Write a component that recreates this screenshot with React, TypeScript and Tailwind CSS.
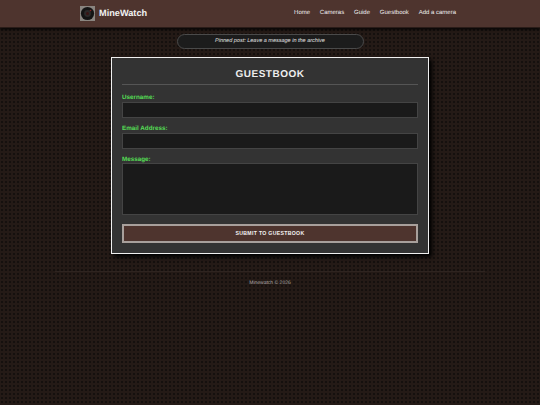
export default function App() {
  const enlaces = ["Home", "Cameras", "Guide", "Guestbook", "Add a camera"];

  return (
    <div className="h-[405px] overflow-hidden opacity-[0.999] bg-[#241a16] bg-[radial-gradient(#15100e_1px,transparent_1.1px)] bg-[size:4px_4px] font-['Liberation_Sans',sans-serif] [text-rendering:geometricPrecision]">
      {/* HEADER */}
      <header className="h-[28px] bg-[#4e342e] border-b border-[#2a1c18] shadow-[0_1px_3px_#000] pl-[80px] pr-[84px] flex items-center justify-between">
        <div className="flex items-center gap-[4px]">
          <svg width="15" height="15" viewBox="0 0 15 15">
            <rect width="15" height="15" fill="#8a8580" />
            <circle cx="7.5" cy="7.5" r="6.6" fill="#141414" />
            <circle cx="7.5" cy="7.5" r="3.4" fill="#2c2a2a" />
            <circle cx="7.5" cy="7.5" r="1.5" fill="#3a1515" />
            <circle cx="10.5" cy="4.5" r="0.8" fill="#8a2020" />
          </svg>
          <span className="text-[9.2px] font-bold text-[#f2f2f2]">MineWatch</span>
        </div>
        <nav className="flex gap-[9.8px] text-[6px] text-[#eeeeee]">
          {enlaces.map((enlace) => (
            <a key={enlace}>{enlace}</a>
          ))}
        </nav>
      </header>

      {/* PINNED POST */}
      <div className="mt-[6px] mx-auto w-[187px] h-[15px] rounded-full bg-[#1c1c1c] border border-[#4a4a4a] flex items-center justify-center text-[5.5px] italic text-[#e4e4e4]">
        Pinned post: Leave a message in the archive
      </div>

      {/* GUESTBOOK */}
      <main className="mt-[8px] mx-auto w-[318px] h-[197px] bg-[#333333] border border-[#f0f0f0] shadow-[3px_3px_4px_#000] px-[10px] pt-[11px]">
        <h1 className="text-center text-[10px] leading-[12px] font-bold tracking-[0.5px] text-[#eeeeee]">GUESTBOOK</h1>
        <div className="mt-[3px] h-px bg-[#555555]" />

        <label className="block mt-[9px] text-[6.3px] leading-[7px] font-bold text-[#55dd55]">Username:</label>
        <div className="mt-[1px] h-[16px] bg-[#1a1a1a] border border-[#444444]" />

        <label className="block mt-[7px] text-[6.3px] leading-[7px] font-bold text-[#55dd55]">Email Address:</label>
        <div className="mt-[1px] h-[16px] bg-[#1a1a1a] border border-[#444444]" />

        <label className="block mt-[7px] text-[6.3px] leading-[7px] font-bold text-[#55dd55]">Message:</label>
        <div className="h-[52px] bg-[#1a1a1a] border border-[#444444]" />

        <button className="mt-[9px] w-full h-[19px] bg-[#4e342e] border-2 border-[#a8a09c] text-[5.2px] font-bold tracking-[0.3px] text-[#f2f2f2]">
          SUBMIT TO GUESTBOOK
        </button>
      </main>

      {/* FOOTER */}
      <footer className="mt-[17px] mx-[55px] border-t border-[#2e2420] pt-[8px] text-center text-[5px] leading-[7px] text-[#b0aba8]">
        Minewatch © 2026
      </footer>
    </div>
  );
}
